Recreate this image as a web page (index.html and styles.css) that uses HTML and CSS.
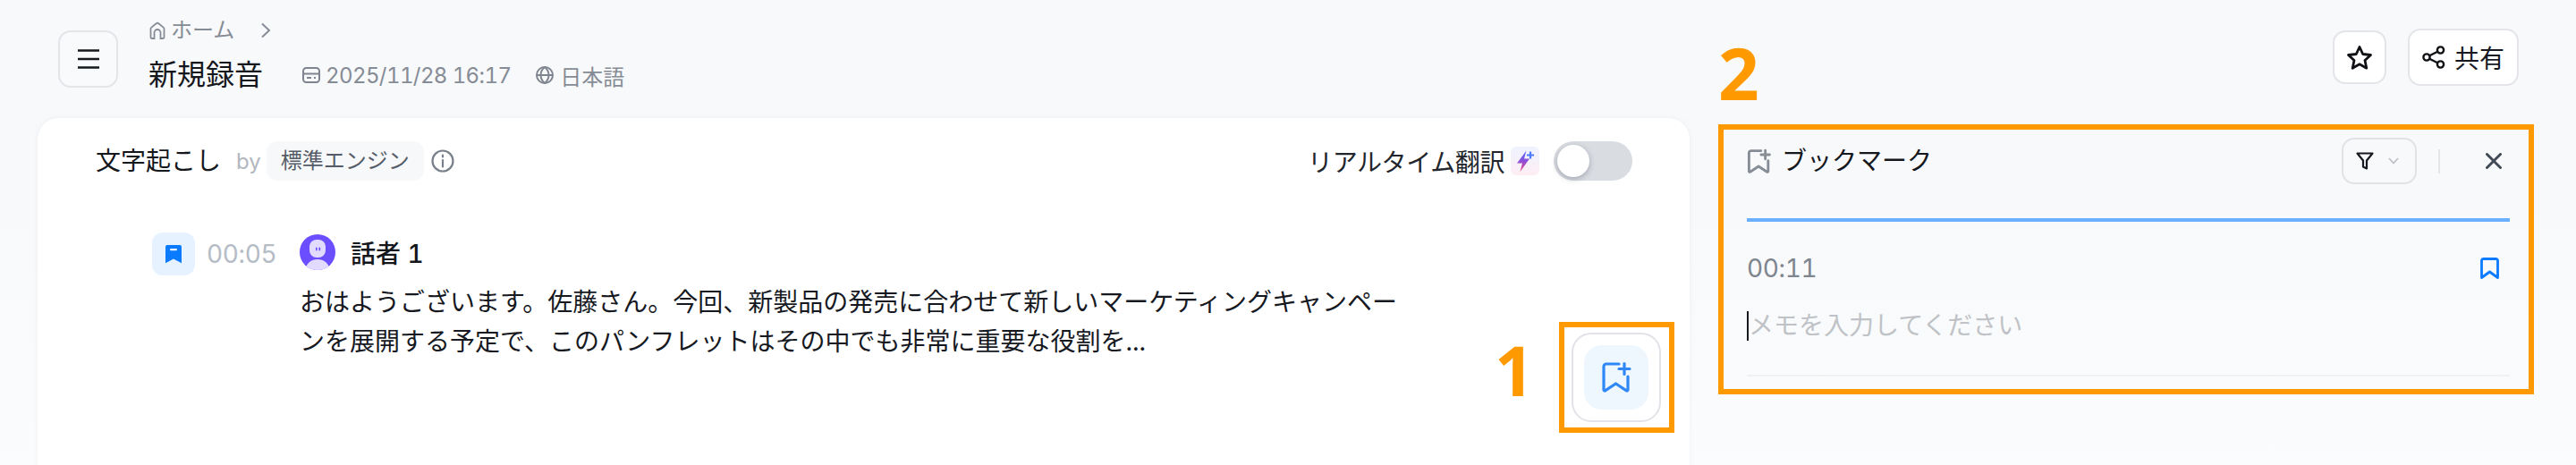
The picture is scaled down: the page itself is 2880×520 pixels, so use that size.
FILE: index.html
```html
<!DOCTYPE html>
<html lang="ja">
<head>
<meta charset="utf-8">
<title>新規録音</title>
<link rel="stylesheet" href="styles.css">
</head>
<body>
<div class="app">
  <header class="topbar">
    <button class="btn menu-btn" aria-label="メニュー">
      <svg class="ic-menu" viewBox="0 0 26 24"><path d="M1 2.500h24M1 12h24M1 21.500h24"/></svg>
    </button>
    <div class="title-block">
      <nav class="crumbs">
        <svg class="ic-home" viewBox="0 0 20 20"><path d="M2.500 17.500V8.200a2 2 0 0 1 .8-1.600l5.400-4.300a2 2 0 0 1 2.600 0l5.400 4.300a2 2 0 0 1 .8 1.600v9.300a1.500 1.500 0 0 1-1.500 1.500h-2.500v-6.500a3.500 3.500 0 0 0-7 0V19H4a1.500 1.500 0 0 1-1.500-1.500z"/></svg>
        <span>ホーム</span>
        <svg class="ic-chev" viewBox="0 0 12 18"><path d="M2 1.500l8 7.500-8 7.500"/></svg>
      </nav>
      <div class="title-row">
        <h1>新規録音</h1>
        <span class="meta">
          <svg class="ic-date" viewBox="0 0 20 18"><rect x="1" y="1" width="18" height="16" rx="3.500"/><path d="M1 7.500h18"/><path d="M5 12h5M13 12h2"/></svg>
          <span class="date-text">2025/11/28 16:17</span>
        </span>
        <span class="meta lang">
          <svg class="ic-meta" viewBox="0 0 20 20"><circle cx="10" cy="10" r="9"/><path d="M1 10h18M10 1c-6 5-6 13 0 18M10 1c6 5 6 13 0 18"/></svg>
          日本語
        </span>
      </div>
    </div>
    <div class="top-actions">
      <button class="btn star-btn" aria-label="お気に入り">
        <svg class="ic-star" viewBox="0 0 30 29"><path d="M15 2.500l3.700 8 8.800 1-6.500 6 1.800 8.700L15 21.800 7.200 26.200 9 17.500l-6.500-6 8.800-1z"/></svg>
      </button>
      <button class="btn share-btn">
        <svg class="ic-share" viewBox="0 0 26 26"><circle cx="5" cy="13" r="3.600"/><circle cx="20.500" cy="5" r="3.600"/><circle cx="20.500" cy="21" r="3.600"/><path d="M8.200 11.300l9-4.600M8.200 14.700l9 4.600"/></svg>
        共有
      </button>
    </div>
  </header>

  <main class="workspace">
    <section class="card">
      <div class="card-head">
        <span class="card-title">文字起こし</span>
        <span class="by">by</span>
        <span class="tag">標準エンジン</span>
        <svg class="ic-info" viewBox="0 0 26 26"><circle cx="13" cy="13" r="11.500"/><path d="M13 12v7.500M13 6.500v2"/></svg>
        <span class="rt-label">リアルタイム翻訳</span>
        <span class="spark">
          <svg viewBox="0 0 32 32"><defs><linearGradient id="bolt" x1="0" y1="0" x2="0" y2="1"><stop offset="0" stop-color="#4b6bff"/><stop offset=".5" stop-color="#8e4fd8"/><stop offset="1" stop-color="#f0407f"/></linearGradient></defs><path fill="url(#bolt)" d="M17.500 4.500L7 18.500h6L10.500 28 21 13.500h-6z"/><path class="plus" d="M22 5.500v8M18 9.500h8"/></svg>
        </span>
        <span class="toggle"><span class="knob"></span></span>
      </div>

      <article class="entry">
        <span class="mark-tile">
          <svg viewBox="0 0 20 21"><path class="fill" d="M3 0h14a2 2 0 0 1 2 2v18.200l-9-4.700-9 4.700V2a2 2 0 0 1 2-2z"/><rect class="slot" x="6" y="4" width="8" height="2.200" rx="1"/></svg>
        </span>
        <span class="time">00:05</span>
        <div class="entry-body">
          <div class="speaker">
            <svg class="avatar" viewBox="0 0 40 40"><defs><clipPath id="round"><circle cx="20" cy="20" r="20"/></clipPath></defs><circle class="av-bg" cx="20" cy="20" r="20"/><g clip-path="url(#round)"><rect class="av-fg" x="11" y="6" width="18" height="20" rx="8"/><ellipse class="av-fg" cx="20" cy="39" rx="13" ry="11"/></g><rect class="av-bg" x="18" y="14.500" width="1.600" height="4" rx=".8"/><rect class="av-bg" x="21.500" y="14.500" width="1.600" height="4" rx=".8"/></svg>
            <span class="speaker-name">話者 1</span>
          </div>
          <p class="speech">おはようございます。佐藤さん。今回、新製品の発売に合わせて新しいマーケティングキャンペーンを展開する予定で、このパンフレットはその中でも非常に重要な役割を...</p>
        </div>
      </article>

      <span class="callout callout-one">1</span>
      <div class="float-box">
        <button class="float-btn" aria-label="ブックマークを追加">
          <span class="float-tile">
            <svg class="ic-addmark" viewBox="0 0 34 36"><path d="M20 3H6a3 3 0 0 0-3 3v26c0 .8.900 1.300 1.600.8L16.500 25l11.900 7.800c.7.500 1.600 0 1.600-.8V17"/><path d="M26 2.500v12M20 8.500h12"/></svg>
          </span>
        </button>
      </div>
    </section>

    <aside class="panel">
      <span class="callout callout-two">2</span>
      <div class="panel-head">
        <svg class="ic-addmark small" viewBox="0 0 34 36"><path d="M20 3H6a3 3 0 0 0-3 3v26c0 .8.900 1.300 1.600.8L16.500 25l11.900 7.800c.7.500 1.600 0 1.600-.8V17"/><path d="M26 2.500v12M20 8.500h12"/></svg>
        <span class="panel-title">ブックマーク</span>
        <button class="filter" aria-label="フィルター">
          <svg class="ic-filter" viewBox="0 0 20 20"><path d="M1.500 1.500h17L12 9.500v9l-4-2v-7z"/></svg>
          <svg class="ic-down" viewBox="0 0 12 8"><path d="M1 1l5 5.500L11 1"/></svg>
        </button>
        <span class="vsep"></span>
        <svg class="ic-close" viewBox="0 0 18 18"><path d="M1.500 1.500l15 15M16.500 1.500l-15 15"/></svg>
      </div>
      <div class="progress"></div>
      <div class="bm-row">
        <span class="bm-time">00:11</span>
        <svg class="ic-mark" viewBox="0 0 21 24"><path d="M3.500 1.500h14a2 2 0 0 1 2 1.500v19.500l-9-6.500-9 6.500V3a2 2 0 0 1 2-1.500z"/></svg>
      </div>
      <div class="memo"><span class="caret"></span><span class="placeholder">メモを入力してください</span></div>
    </aside>
  </main>
</div>
</body>
</html>
```
FILE: styles.css
```css
* { box-sizing: border-box; }
html, body { margin: 0; height: 100%; }
body {
  background: linear-gradient(180deg, #f8f9fb 0%, #f8f9fb 45%, #fbfcfd 100%);
  color: #16191f;
  font-family: Inter, "Noto Sans CJK JP", "Noto Sans", sans-serif;
  font-size: 28px;
  font-variant-numeric: tabular-nums;
  overflow: hidden;
}
svg { display: block; flex: none; fill: none; }
button { font: inherit; color: inherit; padding: 0; cursor: pointer; }
h1, p { margin: 0; font-weight: 400; }

.app { width: 2880px; height: 520px; overflow: hidden; }

/* top bar */
.topbar { display: flex; align-items: flex-start; height: 132px; padding: 0 64px 0 65px; }
.btn {
  display: flex; align-items: center; justify-content: center;
  border: 2px solid #e3e5e9; border-radius: 14px; background: #fff;
}
.menu-btn { width: 67px; height: 64px; margin-top: 34px; background: #f9fafb; }
.ic-menu { width: 26px; height: 24px; stroke: #15181d; stroke-width: 2.600; }
.title-block { margin-left: 34px; padding-top: 22px; }
.crumbs { display: flex; align-items: center; height: 24px; font-size: 24px; line-height: 24px; color: #868c95; }
.ic-home { width: 20px; height: 20px; margin-right: 5px; stroke: #868c95; stroke-width: 1.800; }
.ic-chev { width: 12px; height: 18px; margin-left: 29px; stroke: #868c95; stroke-width: 2; }
.title-row { display: flex; align-items: center; height: 44px; margin-top: 16px; }
h1 { font-size: 32px; line-height: 44px; color: #14171c; }
.meta { display: flex; align-items: center; gap: 7px; font-size: 24px; color: #868c95; margin-left: 44px; }
.meta.lang { margin-left: 28px; }
.date-text { letter-spacing: -.6px; margin-left: -1px; }
.ic-meta { width: 20px; height: 20px; stroke: #7e858e; stroke-width: 2; }
.ic-date { width: 20px; height: 18px; stroke: #7e858e; stroke-width: 2; }
.top-actions { display: flex; align-items: center; gap: 24px; margin-left: auto; margin-top: 32px; height: 64px; }
.star-btn { width: 60px; height: 60px; }
.ic-star { width: 30px; height: 29px; stroke: #0f1115; stroke-width: 2.800; stroke-linejoin: round; }
.share-btn { width: 124px; height: 64px; gap: 10px; font-size: 28px; color: #16191f; }
.ic-share { width: 26px; height: 26px; stroke: #0f1115; stroke-width: 2.400; }

/* workspace */
.workspace { display: flex; align-items: flex-start; gap: 32px; padding-left: 42px; }

.card {
  position: relative;
  width: 1847px; height: 420px; flex: none;
  padding-top: 26px;
  background: #fff;
  border-radius: 24px;
  box-shadow: 0 0 6px rgba(20, 30, 60, .05);
}
.card-head { display: flex; align-items: center; height: 44px; padding: 0 64px 0 65px; }
.card-title { line-height: 44px; color: #14171c; }
.by { font-size: 24px; color: #b2b7bf; margin-left: 17px; }
.tag { margin-left: 6px; padding: 0 16px; height: 44px; line-height: 44px; font-size: 24px; color: #555c67; background: #f7f8fa; border-radius: 12px; }
.ic-info { width: 26px; height: 26px; margin-left: 8px; stroke: #79808a; stroke-width: 2.200; stroke-linecap: round; }
.rt-label { margin-left: auto; color: #22262c; letter-spacing: -.4px; }
.spark { width: 32px; height: 32px; margin-left: 7px; background: linear-gradient(180deg, #eff3ff, #feeef4); border-radius: 6px; }
.spark svg { width: 32px; height: 32px; }
.spark .plus { stroke: #4b7bff; stroke-width: 2.200; }
.toggle { display: flex; align-items: center; width: 88px; height: 44px; margin-left: 16px; padding-left: 4px; border-radius: 22px; background: #d9dce1; }
.knob { width: 36px; height: 36px; border-radius: 50%; background: #fff; box-shadow: 0 2px 6px rgba(30, 40, 60, .3); }

.entry { display: flex; align-items: flex-start; margin: 58px 0 0 128px; }
.mark-tile { display: flex; align-items: center; justify-content: center; width: 48px; height: 48px; border-radius: 12px; background: #e6f2ff; }
.mark-tile svg { width: 20px; height: 21px; }
.mark-tile .fill { fill: #0a7aff; }
.mark-tile .slot { fill: #e6f2ff; }
.time { width: 75px; margin-left: 13px; line-height: 48px; color: #b5bcc6; letter-spacing: -.4px; }
.entry-body { width: 1240px; margin-left: 29px; padding-top: 2px; }
.speaker { display: flex; align-items: center; gap: 17px; height: 40px; }
.avatar { width: 40px; height: 40px; }
.av-bg { fill: #6b4eff; }
.av-fg { fill: #e2dbff; }
.speaker-name { font-weight: 500; color: #14171c; }
.speech { margin-top: 14px; line-height: 44px; color: #16191f; }

.callout { position: absolute; color: #ff9900; font-family: "Open Sans", sans-serif; font-weight: 700; line-height: 1; }
.callout-one { left: 1629px; top: 243px; font-size: 77px; }
.float-box {
  position: absolute; left: 1701px; top: 228px;
  width: 129px; height: 124px; padding: 6px 0 0 8px;
  border: 6px solid #ff9900;
}
.float-btn { display: flex; align-items: center; justify-content: center; width: 100px; height: 100px; border: 2px solid #e2e3e8; border-radius: 22px; background: #fff; }
.float-tile { display: flex; align-items: center; justify-content: center; width: 72px; height: 72px; border-radius: 20px; background: #eef6fe; }
.ic-addmark { width: 34px; height: 36px; stroke: #2f88f5; stroke-width: 3.200; stroke-linecap: round; stroke-linejoin: round; }
.ic-addmark.small { width: 27px; height: 29px; stroke: #868d96; stroke-width: 3.600; }

/* bookmark panel */
.panel {
  position: relative;
  width: 912px; height: 302px; flex: none; margin-top: 7px;
  padding: 9px 21px 0 26px;
  border: 6px solid #ff9900;
}
.callout-two { left: -6px; top: -104px; font-size: 80px; }
.panel-head { display: flex; align-items: center; height: 52px; }
.panel-title { margin-left: 12px; color: #14171c; line-height: 52px; }
.filter { display: flex; align-items: center; width: 84px; height: 52px; margin-left: auto; padding-left: 14px; border: 2px solid #e0e2e5; border-radius: 14px; background: transparent; }
.ic-filter { width: 20px; height: 20px; stroke: #16191f; stroke-width: 2.200; stroke-linejoin: round; }
.ic-down { width: 12px; height: 8px; margin-left: 16px; stroke: #bcc0c6; stroke-width: 1.800; }
.vsep { width: 2px; height: 27px; margin-left: 24px; background: #e3e5e8; }
.ic-close { width: 18px; height: 18px; margin-left: 51px; margin-right: 9px; stroke: #414b58; stroke-width: 3; stroke-linecap: round; }
.progress { height: 4px; margin-top: 38px; background: #6bb0ff; }
.bm-row { display: flex; align-items: center; justify-content: space-between; height: 24px; margin-top: 40px; padding-right: 12px; }
.bm-time { color: #7e858e; line-height: 24px; letter-spacing: -.4px; }
.ic-mark { width: 21px; height: 24px; stroke: #0a7aff; stroke-width: 2.800; stroke-linejoin: round; }
.memo { display: flex; align-items: flex-start; height: 86px; margin-top: 23px; padding-top: 13px; border-bottom: 2px solid #f0f1f3; }
.caret { width: 2px; height: 33px; background: #16191f; }
.placeholder { line-height: 33px; color: #bfc2c6; }
```
